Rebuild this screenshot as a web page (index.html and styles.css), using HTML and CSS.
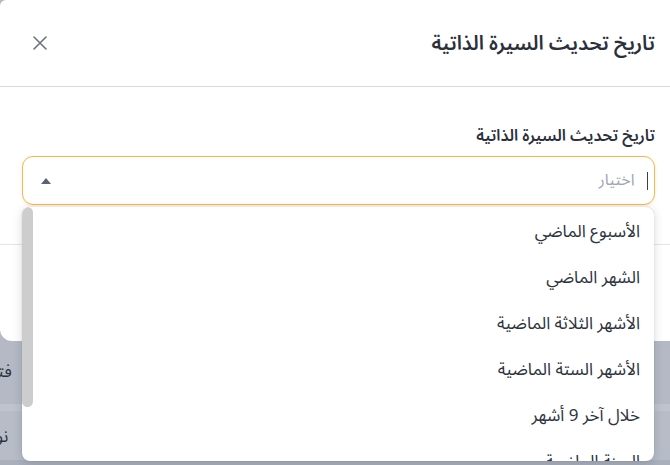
FILE: index.html
```html
<!DOCTYPE html>
<html lang="ar" dir="rtl">
<head>
<meta charset="utf-8">
<title>تاريخ تحديث السيرة الذاتية</title>
<link rel="stylesheet" href="styles.css">
</head>
<body>
<div class="page">
  <div class="page-top"></div>
  <div class="page-row row-a"><span class="row-text">فتح</span></div>
  <div class="page-row row-b"><span class="row-text">نوع</span></div>
  <div class="page-row row-c"></div>
</div>

<div class="modal">
  <div class="modal-header">
    <h2 class="modal-title">تاريخ تحديث السيرة الذاتية</h2>
    <button class="close-btn" aria-label="إغلاق">
      <svg width="16" height="16" viewBox="0 0 16 16"><path d="M2 2 L14 14 M14 2 L2 14" stroke="#6b7280" stroke-width="1.6" stroke-linecap="round" fill="none"/></svg>
    </button>
  </div>
  <div class="modal-body">
    <label class="field-label">تاريخ تحديث السيرة الذاتية</label>
    <div class="select">
      <span class="caret"></span>
      <span class="placeholder">اختيار</span>
      <span class="spacer"></span>
      <svg class="arrow" width="10" height="6" viewBox="0 0 10 6"><path d="M0 6 L5 0 L10 6 Z" fill="#5b6477"/></svg>
    </div>
    <div class="menu">
      <div class="menu-list">
        <div class="menu-item">الأسبوع الماضي</div>
        <div class="menu-item">الشهر الماضي</div>
        <div class="menu-item">الأشهر الثلاثة الماضية</div>
        <div class="menu-item">الأشهر الستة الماضية</div>
        <div class="menu-item">خلال آخر 9 أشهر</div>
        <div class="menu-item">السنة الماضية</div>
      </div>
      <div class="scroll-thumb"></div>
    </div>
  </div>
  <div class="modal-footer"></div>
</div>
</body>
</html>
```

FILE: styles.css
```css
* { box-sizing: border-box; }
html, body {
  margin: 0;
  padding: 0;
  width: 670px;
  height: 465px;
  overflow: hidden;
}
body {
  font-family: "Noto Sans Arabic", "Noto Sans", "DejaVu Sans", sans-serif;
  background: #b4b9c5;
  position: relative;
  color: #2d3340;
}
.page {
  display: flex;
  flex-direction: column;
}
.page-top { height: 341px; }
.page-row {
  display: flex;
  justify-content: flex-end;
  overflow: hidden;
}
.row-a {
  height: 70px;
  align-items: center;
  background: #b4b9c5;
  border-bottom: 7px solid #bec3cd;
}
.row-b {
  height: 49px;
  align-items: flex-start;
  padding-top: 18px;
  background: #b7bcc7;
}
.row-c { height: 12px; background: #a9afbb; }
.row-text {
  font-size: 17px;
  line-height: 1;
  color: #2d3340;
  margin-left: -13px;
}
.modal {
  position: absolute;
  top: 0;
  left: 0;
  width: 690px;
  height: 341px;
  background: #fff;
  border-radius: 6px 0 12px 12px;
  display: flex;
  flex-direction: column;
}
.modal-header {
  height: 87px;
  border-bottom: 1px solid #d9dbe1;
  display: flex;
  align-items: center;
  justify-content: space-between;
  padding: 0 35px 0 30px;
}
.modal-title {
  margin: 0;
  font-size: 20px;
  font-weight: 600;
  color: #2b303b;
  line-height: 1;
  padding-top: 2px;
}
.close-btn {
  border: 0;
  background: none;
  padding: 0;
  width: 18px;
  height: 18px;
  display: flex;
  align-items: center;
  justify-content: center;
  margin-left: 1px;
}
.modal-body {
  position: relative;
  height: 158px;
  border-bottom: 1px solid #e3e5ea;
  padding: 38px 35px 0 22px;
  display: flex;
  flex-direction: column;
  align-items: stretch;
}
.field-label {
  font-size: 16px;
  font-weight: 600;
  color: #2b303b;
  line-height: 22px;
  height: 22px;
  margin-bottom: 9px;
}
.select {
  height: 49px;
  width: 633px;
  border: 1.5px solid #f5b84c;
  border-radius: 11px;
  display: flex;
  align-items: center;
  padding: 0 6px 0 18px;
  background: #fff;
  box-shadow: 0 1px 3px rgba(245, 184, 76, 0.25);
}
.caret {
  width: 1.5px;
  height: 18px;
  background: #3a3f4b;
  margin-left: 12px;
}
.placeholder {
  font-size: 16px;
  color: #9ea4b2;
  line-height: 1;
  padding-bottom: 2px;
}
.spacer { flex: 1; }
.arrow { display: block; }
.menu {
  position: absolute;
  top: 120px;
  right: 36px;
  width: 632px;
  height: 254px;
  background: #fff;
  border-radius: 8px;
  box-shadow: 0 2px 10px rgba(30, 40, 60, 0.18), 0 0 1px rgba(30, 40, 60, 0.25);
  overflow: hidden;
  z-index: 5;
}
.menu-list {
  padding-top: 2px;
  display: flex;
  flex-direction: column;
}
.menu-item {
  height: 46px;
  display: flex;
  align-items: center;
  padding: 0 14px 0 0;
  font-size: 17px;
  color: #2d3340;
}
.scroll-thumb {
  position: absolute;
  left: 0;
  top: 0;
  width: 11px;
  height: 200px;
  background: #cdcdcd;
  border-radius: 6px;
}
.modal-footer { flex: 1; }
```
